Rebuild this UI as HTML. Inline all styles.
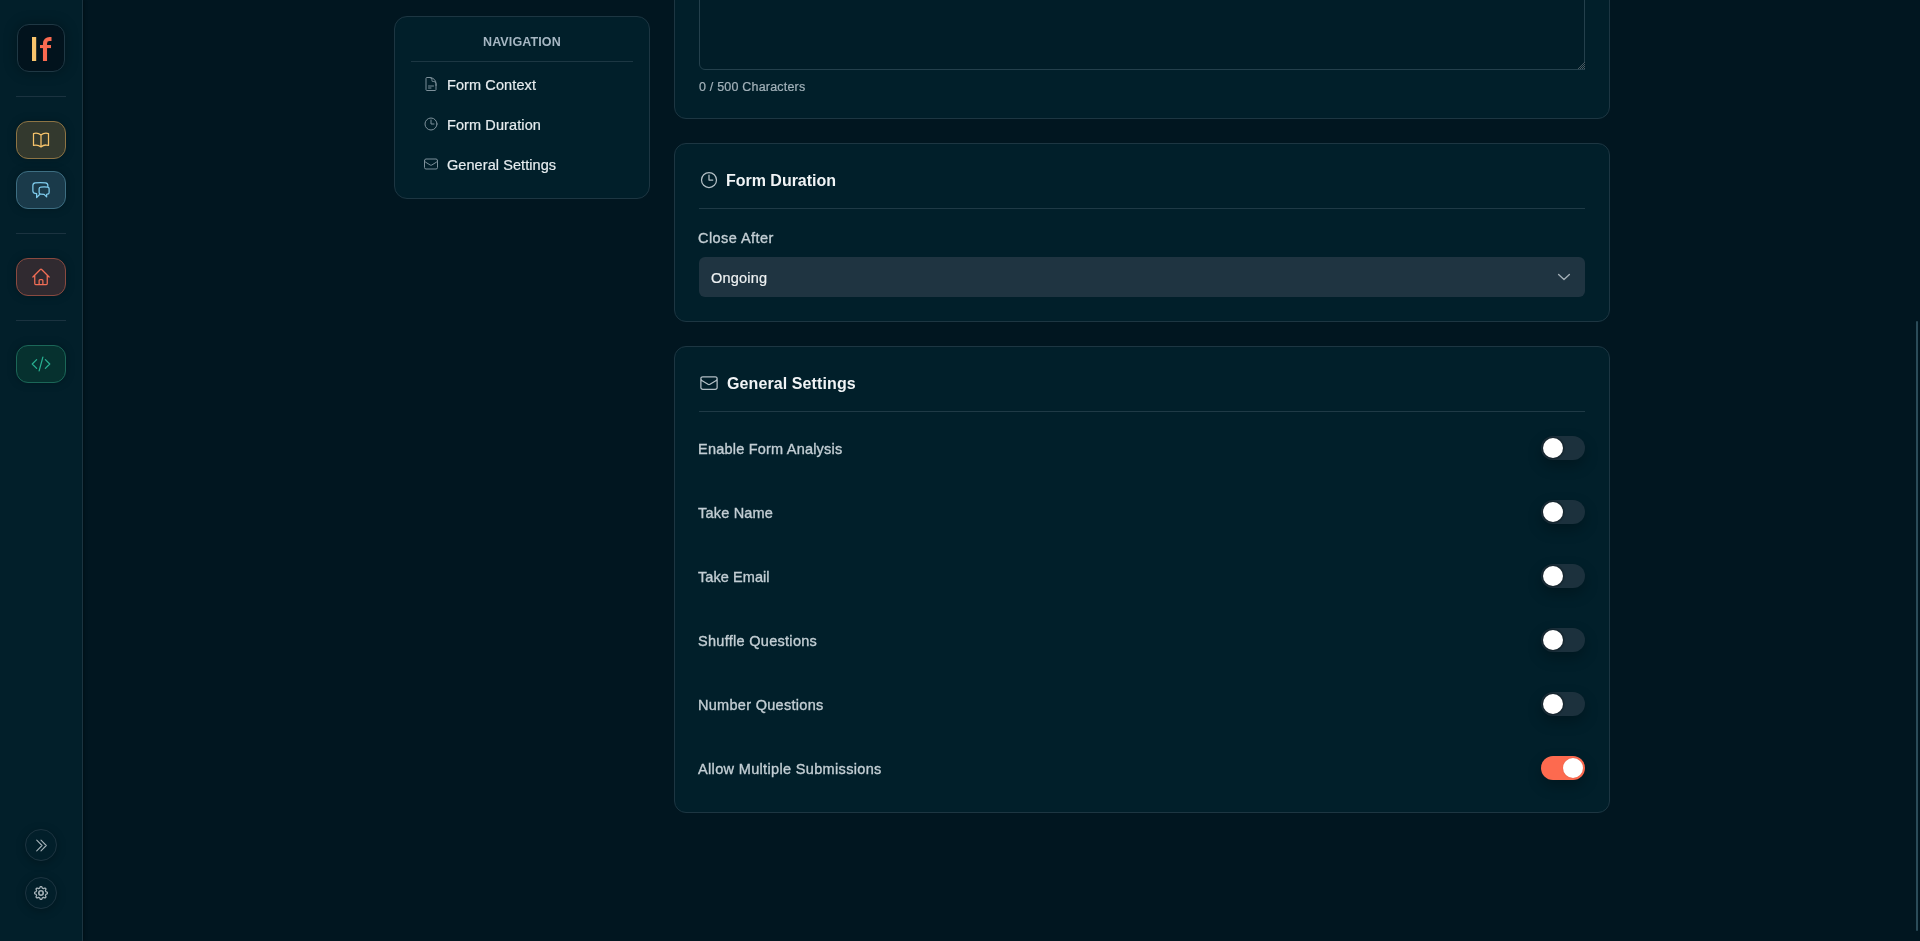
<!DOCTYPE html>
<html><head><meta charset="utf-8">
<style>
*{box-sizing:border-box;margin:0;padding:0}
html,body{width:1920px;height:941px;overflow:hidden;background:#011620;font-family:"Liberation Sans",sans-serif}
svg{position:absolute;overflow:visible}
.t,.lbl,.nav,.h{will-change:transform}
#side{position:absolute;left:0;top:0;width:83px;height:941px;background:#021f2a;border-right:1px solid #1b3440;box-shadow:1px 0 3px rgba(0,0,0,.35)}
.logo{position:absolute;left:17px;top:24px;width:48px;height:48px;border-radius:12px;background:#02131d;border:1px solid #1f3844;box-shadow:0 0 14px rgba(0,0,0,.3)}
.div{position:absolute;left:16px;width:50px;height:1px;background:#1b3340}
.sbtn{position:absolute;left:16px;width:50px;height:38px;border-radius:12px;border:1px solid;box-shadow:0 0 10px rgba(0,0,0,.22)}
.cbtn{position:absolute;left:25px;width:32px;height:32px;border-radius:50%;border:1px solid #1d3440;box-shadow:0 2px 10px rgba(0,0,0,.25)}
.card{position:absolute;background:#011f2a;border:1px solid #1d3642;border-radius:12px}
.t{position:absolute;white-space:nowrap;line-height:20px}
.track{position:absolute;left:1541px;width:44px;height:24px;border-radius:12px;background:#1c313d;box-shadow:0 6px 14px rgba(0,0,0,.25)}
.knob{position:absolute;top:2px;left:2px;width:20px;height:20px;border-radius:50%;background:#fff;box-shadow:0 0 2px 1px rgba(0,0,0,.35)}
.lbl{position:absolute;left:698px;font-size:14.5px;line-height:20px;color:#c3ced4;white-space:nowrap;-webkit-text-stroke:0.35px #c3ced4}
.nav{position:absolute;left:447px;font-size:14.5px;line-height:20px;color:#e6ecef;white-space:nowrap;-webkit-text-stroke:0.2px #e6ecef}
.h{position:absolute;left:726px;font-size:16px;font-weight:700;line-height:24px;color:#f1f4f6;white-space:nowrap}
</style></head><body>
<div id="side">
  <div class="logo"></div>
  <svg style="left:0;top:0" width="83" height="100" viewBox="0 0 83 100">
    <rect x="32" y="37" width="4.2" height="24" fill="#f8c46c"/>
    <path d="M45 61V43.5a4.5 4.5 0 0 1 4.5-4.5h2" fill="none" stroke="#fb6a50" stroke-width="4.1"/>
    <rect x="40" y="45" width="11" height="3.1" fill="#fb6a50"/>
  </svg>
  <div class="div" style="top:96px"></div>
  <div class="sbtn" style="top:121px;background:#33392e;border-color:#8d7444"></div>
  <svg style="left:31px;top:130px" width="20" height="20" viewBox="0 0 24 24" fill="none" stroke="#f6c36b" stroke-width="1.5" stroke-linecap="round" stroke-linejoin="round"><path d="M12 6.042A8.967 8.967 0 0 0 6 3.75c-1.052 0-2.062.18-3 .512v14.25A8.987 8.987 0 0 1 6 18c2.305 0 4.408.867 6 2.292m0-14.25a8.966 8.966 0 0 1 6-2.292c1.052 0 2.062.18 3 .512v14.25A8.987 8.987 0 0 0 18 18a8.967 8.967 0 0 0-6 2.292m0-14.25v14.25"/></svg>
  <div class="sbtn" style="top:171px;background:#1a3a4a;border-color:#3d6e82"></div>
  <svg style="left:31px;top:180px" width="20" height="20" viewBox="0 0 24 24" fill="none" stroke="#7fcbec" stroke-width="1.5" stroke-linecap="round" stroke-linejoin="round"><path d="M20.25 8.511c.884.284 1.5 1.128 1.5 2.097v4.286c0 1.136-.847 2.1-1.98 2.193-.34.027-.68.052-1.02.072v3.091l-3-3c-1.354 0-2.694-.055-4.02-.163a2.115 2.115 0 0 1-.825-.242m9.345-8.334a2.126 2.126 0 0 0-.476-.095 48.64 48.64 0 0 0-8.048 0c-1.131.094-1.976 1.057-1.976 2.192v4.286c0 .837.46 1.58 1.155 1.951m9.345-8.334V6.637c0-1.621-1.152-3.026-2.76-3.235A48.455 48.455 0 0 0 11.25 3c-2.115 0-4.198.137-6.24.402-1.608.209-2.76 1.614-2.76 3.235v6.226c0 1.621 1.152 3.026 2.76 3.235.577.075 1.157.14 1.74.194V21l4.155-4.155"/></svg>
  <div class="div" style="top:233px"></div>
  <div class="sbtn" style="top:258px;background:#302a30;border-color:#8a4a40"></div>
  <svg style="left:31px;top:267px" width="20" height="20" viewBox="0 0 24 24" fill="none" stroke="#f26e56" stroke-width="1.5" stroke-linecap="round" stroke-linejoin="round"><path d="m2.25 12 8.954-8.955c.44-.439 1.152-.439 1.591 0L21.75 12M4.5 9.75v10.125c0 .621.504 1.125 1.125 1.125H9.75v-4.875c0-.621.504-1.125 1.125-1.125h2.25c.621 0 1.125.504 1.125 1.125V21h4.125c.621 0 1.125-.504 1.125-1.125V9.75M8.25 21h8.25"/></svg>
  <div class="div" style="top:320px"></div>
  <div class="sbtn" style="top:345px;background:#06312f;border-color:#1b6758"></div>
  <svg style="left:31px;top:354px" width="20" height="20" viewBox="0 0 24 24" fill="none" stroke="#28b091" stroke-width="1.5" stroke-linecap="round" stroke-linejoin="round"><path d="M17.25 6.75 22.5 12l-5.25 5.25m-10.5 0L1.5 12l5.25-5.25m7.5-3-4.5 16.5"/></svg>
  <div class="cbtn" style="top:829px"></div>
  <svg style="left:32.5px;top:836.5px" width="17" height="17" viewBox="0 0 24 24" fill="none" stroke="#a7b3b9" stroke-width="1.5" stroke-linecap="round" stroke-linejoin="round"><path d="m5.25 4.5 7.5 7.5-7.5 7.5m6-15 7.5 7.5-7.5 7.5"/></svg>
  <div class="cbtn" style="top:877px"></div>
  <svg style="left:31px;top:883px" width="20" height="20" viewBox="0 0 20 20" fill="none" stroke="#a7b3b9" stroke-width="1.25" stroke-linejoin="round"><path d="M8.62 5.19 L9.22 3.65 L10.78 3.65 L11.38 5.19 L12.42 5.63 L13.94 4.96 L15.04 6.06 L14.37 7.58 L14.81 8.62 L16.35 9.22 L16.35 10.78 L14.81 11.38 L14.37 12.42 L15.04 13.94 L13.94 15.04 L12.42 14.37 L11.38 14.81 L10.78 16.35 L9.22 16.35 L8.62 14.81 L7.58 14.37 L6.06 15.04 L4.96 13.94 L5.63 12.42 L5.19 11.38 L3.65 10.78 L3.65 9.22 L5.19 8.62 L5.63 7.58 L4.96 6.06 L6.06 4.96 L7.58 5.63Z"/><circle cx="10" cy="10" r="2.2" stroke-width="1.6"/></svg>
</div>

<!-- nav card -->
<div class="card" style="left:394px;top:16px;width:256px;height:183px;border-radius:13px"></div>
<div class="t" style="left:482.5px;top:32px;font-size:12.5px;font-weight:700;color:#a6b7c3;letter-spacing:0.12px">NAVIGATION</div>
<div style="position:absolute;left:411px;top:61px;width:222px;height:1px;background:#1c3743"></div>
<svg style="left:423px;top:76px" width="16" height="16" viewBox="0 0 24 24" fill="none" stroke="#7d909a" stroke-width="1.5" stroke-linecap="round" stroke-linejoin="round"><path d="M19.5 14.25v-2.625a3.375 3.375 0 0 0-3.375-3.375h-1.5A1.125 1.125 0 0 1 13.5 7.125v-1.5a3.375 3.375 0 0 0-3.375-3.375H8.25m0 12.75h7.5m-7.5 3H12M10.5 2.25H5.625c-.621 0-1.125.504-1.125 1.125v17.25c0 .621.504 1.125 1.125 1.125h12.75c.621 0 1.125-.504 1.125-1.125V11.25a9 9 0 0 0-9-9Z"/></svg>
<div class="nav" style="top:75px;letter-spacing:0.1px">Form Context</div>
<svg style="left:423px;top:116px" width="16" height="16" viewBox="0 0 24 24" fill="none" stroke="#7d909a" stroke-width="1.5" stroke-linecap="round" stroke-linejoin="round"><path d="M12 6v6h4.5m4.5 0a9 9 0 1 1-18 0 9 9 0 0 1 18 0Z"/></svg>
<div class="nav" style="top:115px;letter-spacing:0.1px">Form Duration</div>
<svg style="left:423px;top:156px" width="16" height="16" viewBox="0 0 24 24" fill="none" stroke="#7d909a" stroke-width="1.5" stroke-linecap="round" stroke-linejoin="round"><path d="M21.75 6.75v10.5a2.25 2.25 0 0 1-2.25 2.25h-15a2.25 2.25 0 0 1-2.25-2.25V6.75m19.5 0A2.25 2.25 0 0 0 19.5 4.5h-15a2.25 2.25 0 0 0-2.25 2.25m19.5 0v.243a2.25 2.25 0 0 1-1.07 1.916l-7.5 4.615a2.25 2.25 0 0 1-2.36 0L3.32 8.91a2.25 2.25 0 0 1-1.07-1.916V6.75"/></svg>
<div class="nav" style="top:155px;letter-spacing:0.07px">General Settings</div>

<!-- card1 -->
<div class="card" style="left:674px;top:-40px;width:936px;height:159px"></div>
<div style="position:absolute;left:699px;top:-30px;width:886px;height:100px;border:1px solid #24404c;border-radius:6px;background:#011d28"></div>
<div style="position:absolute;left:1576px;top:62px;width:9px;height:8px;background:#011d28"></div><svg style="left:1576px;top:62px" width="9" height="8" viewBox="0 0 9 8" fill="#4a5a61" shape-rendering="crispEdges"><rect x="8" y="0" width="1" height="1"/><rect x="7" y="1" width="1" height="1"/><rect x="6" y="2" width="1" height="1"/><rect x="8" y="2" width="1" height="1"/><rect x="5" y="3" width="1" height="1"/><rect x="7" y="3" width="1" height="1"/><rect x="4" y="4" width="1" height="1"/><rect x="6" y="4" width="1" height="1"/><rect x="8" y="4" width="1" height="1"/><rect x="3" y="5" width="1" height="1"/><rect x="5" y="5" width="1" height="1"/><rect x="7" y="5" width="1" height="1"/><rect x="2" y="6" width="1" height="1"/><rect x="4" y="6" width="1" height="1"/><rect x="6" y="6" width="1" height="1"/><rect x="8" y="6" width="1" height="1"/><rect x="1" y="7" width="1" height="1"/><rect x="3" y="7" width="1" height="1"/><rect x="5" y="7" width="1" height="1"/><rect x="7" y="7" width="1" height="1"/><path d="M0 7.5H9" stroke="#24404c" stroke-width="1"/></svg>
<div class="t" style="left:699px;top:79px;font-size:12.5px;line-height:16px;color:#a3b2ba;letter-spacing:0.2px;-webkit-text-stroke:0.2px #a3b2ba">0 / 500 Characters</div>

<!-- card2 -->
<div class="card" style="left:674px;top:143px;width:936px;height:179px"></div>
<svg style="left:699px;top:170px" width="20" height="20" viewBox="0 0 24 24" fill="none" stroke="#b3bfc5" stroke-width="1.5" stroke-linecap="round" stroke-linejoin="round"><path d="M12 6v6h4.5m4.5 0a9 9 0 1 1-18 0 9 9 0 0 1 18 0Z"/></svg>
<div class="h" style="top:169px;letter-spacing:-0.02px">Form Duration</div>
<div style="position:absolute;left:699px;top:208px;width:886px;height:1px;background:#1f3a46"></div>
<div class="lbl" style="top:228px;letter-spacing:0.45px">Close After</div>
<div style="position:absolute;left:699px;top:257px;width:886px;height:40px;border-radius:6px;background:#1f3441"></div>
<div class="t" style="left:711px;top:268px;font-size:14.5px;color:#eef1f2;letter-spacing:0.22px;-webkit-text-stroke:0.2px #eef1f2">Ongoing</div>
<svg style="left:1550px;top:265px" width="30" height="25" viewBox="0 0 30 25"><path d="M8.6 9.4 14 14.5 19.4 9.4" fill="none" stroke="#a3b0b7" stroke-width="1.35" stroke-linecap="round" stroke-linejoin="round"/></svg>

<!-- card3 -->
<div class="card" style="left:674px;top:346px;width:936px;height:467px"></div>
<svg style="left:699px;top:373px" width="20" height="20" viewBox="0 0 24 24" fill="none" stroke="#b3bfc5" stroke-width="1.5" stroke-linecap="round" stroke-linejoin="round"><path d="M21.75 6.75v10.5a2.25 2.25 0 0 1-2.25 2.25h-15a2.25 2.25 0 0 1-2.25-2.25V6.75m19.5 0A2.25 2.25 0 0 0 19.5 4.5h-15a2.25 2.25 0 0 0-2.25 2.25m19.5 0v.243a2.25 2.25 0 0 1-1.07 1.916l-7.5 4.615a2.25 2.25 0 0 1-2.36 0L3.32 8.91a2.25 2.25 0 0 1-1.07-1.916V6.75"/></svg>
<div class="h" style="top:372px;left:727px;letter-spacing:0.1px">General Settings</div>
<div style="position:absolute;left:699px;top:411px;width:886px;height:1px;background:#1f3a46"></div>

<div class="lbl" style="top:439px;letter-spacing:0.21px">Enable Form Analysis</div>
<div class="track" style="top:436px"><div class="knob"></div></div>
<div class="lbl" style="top:503px;letter-spacing:0.2px">Take Name</div>
<div class="track" style="top:500px"><div class="knob"></div></div>
<div class="lbl" style="top:567px;letter-spacing:0.07px">Take Email</div>
<div class="track" style="top:564px"><div class="knob"></div></div>
<div class="lbl" style="top:631px;letter-spacing:0.29px">Shuffle Questions</div>
<div class="track" style="top:628px"><div class="knob"></div></div>
<div class="lbl" style="top:695px;letter-spacing:0.29px">Number Questions</div>
<div class="track" style="top:692px"><div class="knob"></div></div>
<div class="lbl" style="top:759px;letter-spacing:0.34px">Allow Multiple Submissions</div>
<div class="track" style="top:756px;background:#fd6a4f"><div class="knob" style="left:22px;box-shadow:0 0 1px rgba(120,30,10,.35)"></div></div>

<!-- scrollbar -->
<div style="position:absolute;left:1916px;top:321px;width:2px;height:610px;border-radius:1px;background:#2b4c59"></div>
</body></html>
